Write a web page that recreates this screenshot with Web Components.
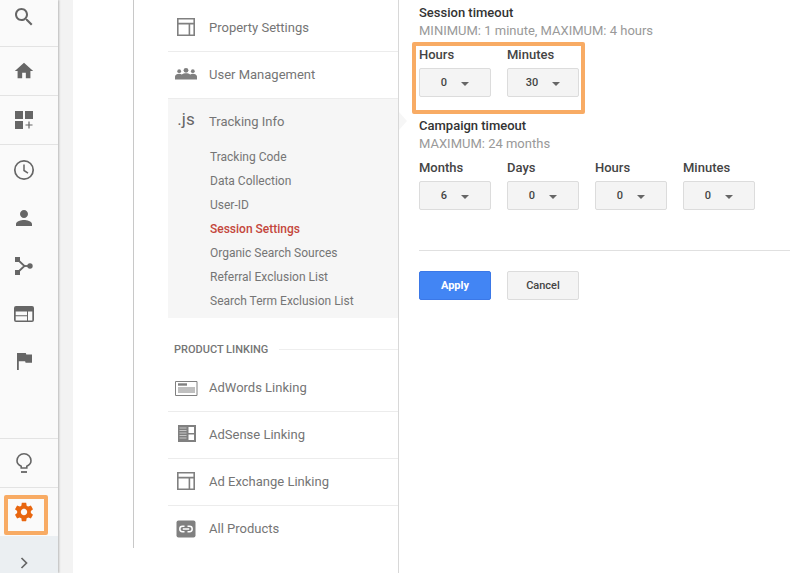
<!DOCTYPE html>
<html>
<head>
<meta charset="utf-8">
<title>Session Settings</title>
<style>
  html, body { margin: 0; height: 573px; overflow: hidden; background: #fff; }
  body { font-family: Roboto, "Liberation Sans", sans-serif; display: flex; }
  svg { display: block; }
</style>
</head>
<body>
<ga-rail>
  <rail-item line tall="47" shift="12"><svg width="24" height="24" viewBox="0 0 24 24" fill="#666"><path d="M15.5 14h-.79l-.28-.27C15.41 12.59 16 11.11 16 9.5 16 5.91 13.09 3 9.5 3S3 5.91 3 9.5 5.91 16 9.5 16c1.61 0 3.09-.59 4.23-1.57l.27.28v.79l5 4.99L20.49 19l-4.99-5zm-6 0C7.01 14 5 11.99 5 9.5S7.01 5 9.5 5 14 7.01 14 9.5 11.99 14 9.5 14z"/></svg></rail-item>
  <rail-item line tall="49"><svg width="22" height="22" viewBox="0 0 24 24" fill="#666"><path d="M10 20v-6h4v6h5v-8h3L12 3 2 12h3v8z"/></svg></rail-item>
  <rail-item line tall="49"><svg width="24" height="24" viewBox="0 0 24 24" fill="#666"><path d="M3 3h8v8H3zM13 3h8v8h-8zM3 13h8v8H3zM16.400 13.500h1.200v2.900h2.900v1.200h-2.900v2.900h-1.200v-2.900h-2.900v-1.200h2.900z"/></svg></rail-item>
  <rail-item tall="49"><svg width="24" height="24" viewBox="0 0 24 24" fill="none" stroke="#666"><circle cx="12" cy="12" r="9.200" stroke-width="1.700"/><path d="M12 6.500v6l4 2.600" stroke-width="1.500"/></svg></rail-item>
  <rail-item tall="48"><svg width="24" height="24" viewBox="0 0 24 24" fill="#666"><path d="M12 12c2.210 0 4-1.790 4-4s-1.790-4-4-4-4 1.790-4 4 1.790 4 4 4zm0 2c-2.670 0-8 1.340-8 4v2h16v-2c0-2.660-5.330-4-8-4z"/></svg></rail-item>
  <rail-item tall="48"><svg width="24" height="24" viewBox="0 0 24 24" fill="#666"><path d="M3 3h5v5H3zM3 16h5v5H3z"/><circle cx="18" cy="12" r="2.700"/><path d="M6 6l6.500 6L6 18" fill="none" stroke="#666" stroke-width="1.800"/><path d="M12 12h5" stroke="#666" stroke-width="1.800"/></svg></rail-item>
  <rail-item tall="48"><svg width="24" height="24" viewBox="0 0 24 24" fill="#666"><path fill-rule="evenodd" d="M4 4h16a2 2 0 0 1 2 2v12a2 2 0 0 1-2 2H4a2 2 0 0 1-2-2V6a2 2 0 0 1 2-2zm-.300 5.500v3.700h11.300V9.500zm0 4.700v4.400h11.300v-4.400zm12.300-4.700v9.100h4.300V9.500z"/></svg></rail-item>
  <rail-item tall="48"><svg width="24" height="24" viewBox="0 0 24 24" fill="#666"><path d="M5 3h1.800v17H5zM6.800 3h7l.5 1.600H20v8.200h-6.400l-.5-1.600H6.800z"/></svg></rail-item>
  <div slot="foot">
    <rail-item top line tall="50"><svg width="24" height="24" viewBox="0 0 24 24" fill="none" stroke="#666" stroke-width="1.600"><path d="M9.200 17v-1.700C6.600 14 5 12.100 5 9.700a7 7 0 0 1 14 0c0 2.400-1.600 4.300-4.200 5.600V17z"/><path d="M9 21h6" stroke-width="1.800"/></svg></rail-item>
    <rail-item tall="48"><svg width="22" height="22" viewBox="0 0 24 24" fill="#e8660f"><path d="M19.430 12.980c.040-.320.070-.640.070-.980s-.030-.660-.070-.980l2.110-1.650c.190-.150.240-.420.120-.640l-2-3.460c-.120-.220-.390-.300-.610-.220l-2.490 1c-.520-.400-1.080-.730-1.690-.980l-.380-2.650C14.460 2.180 14.250 2 14 2h-4c-.250 0-.460.180-.490.420l-.380 2.650c-.610.250-1.170.590-1.690.980l-2.490-1c-.230-.090-.490 0-.610.220l-2 3.460c-.130.220-.070.490.120.640l2.110 1.650c-.040.320-.070.650-.070.980s.030.660.070.980l-2.110 1.650c-.190.150-.240.420-.120.640l2 3.460c.120.220.390.300.610.220l2.490-1c.520.400 1.080.730 1.690.980l.380 2.650c.030.240.240.420.490.420h4c.250 0 .460-.180.490-.420l.380-2.650c.610-.250 1.170-.590 1.690-.980l2.490 1c.230.090.490 0 .610-.220l2-3.460c.120-.220.070-.490-.120-.640l-2.110-1.650zM12 15.500c-1.930 0-3.500-1.570-3.500-3.500s1.570-3.500 3.500-3.500 3.500 1.570 3.500 3.500-1.570 3.500-3.500 3.500z"/></svg><call-out style="--l:4px;--t:7px;--w:36px;--h:32px"></call-out></rail-item>
    <rail-item collapse tall="37" shift="-16"><svg width="12" height="12" viewBox="0 0 12 12" fill="none" stroke="#666" stroke-width="1.700"><path d="M3.500 1l5 5-5 5"/></svg></rail-item>
  </div>
</ga-rail>

<admin-nav>
  <nav-row line label="Property Settings"><svg width="24" height="24" viewBox="0 0 24 24" fill="none" stroke="#808080" stroke-width="1.600"><path d="M3.800 3.800h16.400v16.400H3.800zM3.800 8.600h16.400M15.400 8.600v11.600"/></svg></nav-row>
  <nav-row line label="User Management"><svg width="24" height="24" viewBox="0 0 24 24" fill="#808080"><circle cx="12" cy="8.300" r="2.400"/><circle cx="5.200" cy="9.200" r="1.900"/><circle cx="18.800" cy="9.200" r="1.900"/><path d="M1 17.500v-3c0-1.400 2-2.700 4.200-2.700 1 0 1.800.2 2.600.6 1-.7 2.600-1.200 4.200-1.200s3.200.5 4.200 1.200c.8-.4 1.600-.6 2.600-.6 2.200 0 4.200 1.300 4.200 2.700v3z"/></svg></nav-row>
  <nav-group>
    <nav-row slot="head" label="Tracking Info"><span style="font:17px/24px Roboto,sans-serif;color:#666;display:block;text-align:center;margin-top:-3px">.js</span></nav-row>
    <nav-sub>Tracking Code</nav-sub>
    <nav-sub>Data Collection</nav-sub>
    <nav-sub>User-ID</nav-sub>
    <nav-sub current>Session Settings</nav-sub>
    <nav-sub>Organic Search Sources</nav-sub>
    <nav-sub>Referral Exclusion List</nav-sub>
    <nav-sub>Search Term Exclusion List</nav-sub>
  </nav-group>
  <nav-heading>PRODUCT LINKING</nav-heading>
  <nav-row line label="AdWords Linking"><svg width="24" height="24" viewBox="0 0 24 24" fill="none" stroke="#808080"><path d="M1.500 6.500h21.500v14H1.500z"/><path d="M4 9.500h9" stroke-width="2.400"/><path d="M4 13h17M4 15h17M4 17h17"/></svg></nav-row>
  <nav-row line label="AdSense Linking"><svg width="24" height="24" viewBox="0 0 24 24" fill="#808080"><path fill-rule="evenodd" d="M4 3h18v17H4zM14.500 5v6H20V5zm0 7.500V18H20v-5.500z"/><path d="M5.500 6h7M5.500 8.500h7M5.500 11h7M5.500 13.500h7M5.500 16h7" stroke="#d8d8d8" stroke-width=".8"/></svg></nav-row>
  <nav-row line label="Ad Exchange Linking"><svg width="24" height="24" viewBox="0 0 24 24" fill="none" stroke="#808080" stroke-width="1.600"><path d="M3.800 3.800h16.400v16.400H3.800zM3.800 8.600h16.400M15.400 8.600v11.600"/></svg></nav-row>
  <nav-row label="All Products"><svg width="24" height="24" viewBox="0 0 24 24"><rect x="2.500" y="3.500" width="19" height="17" rx="2" fill="#808080"/><path d="M10.500 9.300H8.500a2.700 2.700 0 0 0 0 5.400h2M13.500 9.300h2a2.700 2.700 0 0 1 0 5.400h-2M8.800 12h6.400" fill="none" stroke="#fff" stroke-width="1.500"/></svg></nav-row>
</admin-nav>

<session-form>
  <timeout-group title-text="Session timeout" hint="MINIMUM: 1 minute, MAXIMUM: 4 hours">
    <time-select label="Hours" value="0"></time-select>
    <time-select label="Minutes" value="30"></time-select>
    <call-out style="--l:-7px;--t:-4px;--w:165px;--h:64px"></call-out>
  </timeout-group>
  <timeout-group title-text="Campaign timeout" hint="MAXIMUM: 24 months">
    <time-select label="Months" value="6"></time-select>
    <time-select label="Days" value="0"></time-select>
    <time-select label="Hours" value="0"></time-select>
    <time-select label="Minutes" value="0"></time-select>
  </timeout-group>
  <div slot="actions">
    <ga-button primary>Apply</ga-button>
    <ga-button>Cancel</ga-button>
  </div>
</session-form>

<script>
// small helper so every element gets its open shadow root the same way
function shadow (el, html) {
  el.attachShadow({ mode: 'open' }).innerHTML = html;
}

class GaRail extends HTMLElement {
  constructor () {
    super();
    shadow(this, `<style>
      :host { display: flex; flex: none; width: 73px; height: 573px; background: #f3f3f3; }
      .bar { width: 58px; height: 573px; background: #fafafa; display: flex; flex-direction: column;
             justify-content: space-between; box-shadow: 1px 0 2px rgba(0,0,0,.25); }
    </style>
    <div class="bar"><div><slot></slot></div><slot name="foot"></slot></div>`);
  }
}
customElements.define('ga-rail', GaRail);

class RailItem extends HTMLElement {
  constructor () {
    super();
    const tall = this.getAttribute('tall') || 48;
    const shift = +this.getAttribute('shift') || 0;
    const pad = shift >= 0 ? `padding-bottom:${shift}px` : `padding-top:${-shift}px`;
    // icons sit left of the bar's middle, hence the right padding
    shadow(this, `<style>
      :host { display: flex; position: relative; align-items: center; justify-content: center;
              box-sizing: border-box; height: ${tall}px; padding-right: 10px; ${pad}; }
      :host([line]) { border-bottom: 1px solid #e3e3e3; }
      :host([top]) { border-top: 1px solid #e3e3e3; }
      :host([collapse]) { background: #ebeff2; }
    </style><slot></slot>`);
  }
}
customElements.define('rail-item', RailItem);

// orange annotation drawn over the screenshot
class CallOut extends HTMLElement {
  constructor () {
    super();
    shadow(this, `<style>
      :host { position: absolute; left: var(--l); top: var(--t); width: var(--w); height: var(--h);
              border: 4px solid #f8ab64; border-radius: 2px; }
    </style>`);
  }
}
customElements.define('call-out', CallOut);

class AdminNav extends HTMLElement {
  constructor () {
    super();
    shadow(this, `<style>
      :host { display: block; flex: none; box-sizing: border-box; margin-left: 60px; width: 266px; height: 573px;
              border-right: 1px solid #d8d8d8; color: #757575; }
      .col { height: 543px; padding: 5px 0 0 34px; border-left: 1px solid #c8c8c8; }
    </style><div class="col"><slot></slot></div>`);
  }
}
customElements.define('admin-nav', AdminNav);

class NavRow extends HTMLElement {
  constructor () {
    super();
    shadow(this, `<style>
      :host { display: flex; align-items: center; box-sizing: border-box; height: 47px; padding-bottom: 2px; font-size: 13px; }
      :host([line]) { border-bottom: 1px solid #ececec; }
      .ic { width: 24px; height: 24px; margin: 0 11px 0 6px; }
    </style><div class="ic"><slot></slot></div><span>${this.getAttribute('label')}</span>`);
  }
}
customElements.define('nav-row', NavRow);

class NavGroup extends HTMLElement {
  constructor () {
    super();
    shadow(this, `<style>
      :host { display: block; position: relative; height: 219px; background: #f6f6f6; }
      .list { margin-top: -1px; }
      .notch { position: absolute; right: -9px; top: 13px; width: 0; height: 0;
               border: 9px solid transparent; border-left: 8px solid #f6f6f6; border-right: 0; }
    </style><slot name="head"></slot><div class="notch"></div><div class="list"><slot></slot></div>`);
  }
}
customElements.define('nav-group', NavGroup);

class NavSub extends HTMLElement {
  constructor () {
    super();
    shadow(this, `<style>
      :host { display: block; height: 24px; line-height: 24px; padding-left: 42px; font-size: 12px; color: #757575; }
      :host([current]) { color: #c4463c; font-weight: 500; }
    </style><slot></slot>`);
  }
}
customElements.define('nav-sub', NavSub);

class NavHeading extends HTMLElement {
  constructor () {
    super();
    shadow(this, `<style>
      :host { display: flex; align-items: center; gap: 11px; height: 22px; margin: 20px 0 5px; padding-left: 6px;
              font-size: 11px; font-weight: 500; color: #757575; }
      i { flex: 1; border-top: 1px solid #eee; }
    </style><slot></slot><i></i>`);
  }
}
customElements.define('nav-heading', NavHeading);

class SessionForm extends HTMLElement {
  constructor () {
    super();
    shadow(this, `<style>
      :host { display: block; flex: 1; padding: 4px 0 0 20px; }
      hr { height: 1px; border: 0; background: #e0e0e0; margin: 40px 0 20px; }
    </style><slot></slot><hr><slot name="actions"></slot>`);
  }
}
customElements.define('session-form', SessionForm);

class TimeoutGroup extends HTMLElement {
  constructor () {
    super();
    shadow(this, `<style>
      :host { display: block; margin-bottom: 20px; }
      :host(:last-of-type) { margin-bottom: 0; }
      h3 { margin: 0; font-size: 13px; line-height: 17px; font-weight: 500; color: #333; }
      p { margin: 1px 0 6px; font-size: 13px; line-height: 18px; color: #999; }
      .fields { display: flex; gap: 16px; position: relative; }
    </style>
    <h3>${this.getAttribute('title-text')}</h3>
    <p>${this.getAttribute('hint')}</p>
    <div class="fields"><slot></slot></div>`);
  }
}
customElements.define('timeout-group', TimeoutGroup);

class TimeSelect extends HTMLElement {
  constructor () {
    super();
    shadow(this, `<style>
      :host { display: block; width: 72px; }
      label { display: block; font-size: 13px; line-height: 17px; font-weight: 500; color: #444; margin-bottom: 5px; }
      .box { display: flex; align-items: center; justify-content: center; gap: 14px; box-sizing: border-box; height: 29px;
             background: #f4f4f4; border: 1px solid #dcdcdc; border-radius: 2px;
             font-size: 11px; font-weight: 500; color: #444; }
      .car { width: 0; height: 0; border: 4px solid transparent; border-top-color: #666; border-bottom: 0; margin-top: 2px; }
    </style>
    <label>${this.getAttribute('label')}</label>
    <div class="box"><span>${this.getAttribute('value')}</span><span class="car"></span></div>`);
  }
}
customElements.define('time-select', TimeSelect);

class GaButton extends HTMLElement {
  constructor () {
    super();
    shadow(this, `<style>
      :host { display: inline-flex; align-items: center; justify-content: center; box-sizing: border-box;
              width: 72px; height: 29px; margin-right: 12px; border-radius: 2px; font-size: 11px; font-weight: 500;
              background: #f4f4f4; border: 1px solid #dcdcdc; color: #444; }
      :host([primary]) { background: #4285f4; border-color: #3b78e7; color: #fff; font-weight: 700; }
    </style><slot></slot>`);
  }
}
customElements.define('ga-button', GaButton);
</script>
</body>
</html>
